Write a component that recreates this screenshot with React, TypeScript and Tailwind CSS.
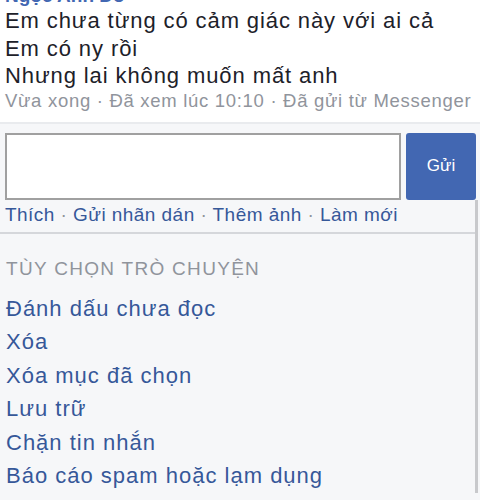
const options = [
  "Đánh dấu chưa đọc",
  "Xóa",
  "Xóa mục đã chọn",
  "Lưu trữ",
  "Chặn tin nhắn",
  "Báo cáo spam hoặc lạm dụng",
];

const App: React.FC = () => {
  return (
    <div className="w-[480px] h-[500px] overflow-hidden bg-white font-['Liberation_Sans',Arial,sans-serif]">
      <div className="px-[5px] pb-[10px] -mt-[15px]">
        <div className="text-[19px] leading-[22px] font-bold text-[#4267b2]">Ngọc Anh Đỗ</div>
        <div className="text-[22px] leading-[27.5px] tracking-[0.9px] text-[#1d2129]">
          <p>Em chưa từng có cảm giác này với ai cả</p>
          <p>Em có ny rồi</p>
          <p>Nhưng lai không muốn mất anh</p>
        </div>
        <div className="text-[18.5px] leading-[22px] tracking-[0.7px] text-[#90949c]">
          Vừa xong · Đã xem lúc 10:10 · Đã gửi từ Messenger
        </div>
      </div>
      <div className="border-t-2 border-[#e9ebee] bg-[#f6f7f9] h-full">
        <div className="flex gap-[5px] pl-[5px] pt-[9px]">
          <div className="w-[396px] h-[67px] bg-white border-2 border-[#a0a0a0]"></div>
          <button className="w-[70px] h-[67px] rounded-[3px] bg-[#4267b2] text-white text-[17px]">
            Gửi
          </button>
        </div>
        <div className="mr-[2px] border-r-[3px] border-[#c8c9cc]">
          <div className="px-[5px] pt-[3px] pb-[5px] text-[19px] leading-[24px] tracking-[0.45px] text-[#365899]">
            Thích <span className="text-[#90949c]">·</span> Gửi nhãn dán{" "}
            <span className="text-[#90949c]">·</span> Thêm ảnh{" "}
            <span className="text-[#90949c]">·</span> Làm mới
          </div>
          <div className="border-t-2 border-[#d5d7db] px-[6px] pt-[24px]">
            <div className="text-[19px] leading-[22px] tracking-[1.3px] text-[#90949c] uppercase">
              Tùy chọn trò chuyện
            </div>
            <ul className="mt-[12px]">
              {options.map((o) => (
                <li key={o} className="text-[22px] leading-[33.5px] tracking-[1px] text-[#365899]">
                  {o}
                </li>
              ))}
            </ul>
          </div>
        </div>
      </div>
    </div>
  );
};

export default App;
